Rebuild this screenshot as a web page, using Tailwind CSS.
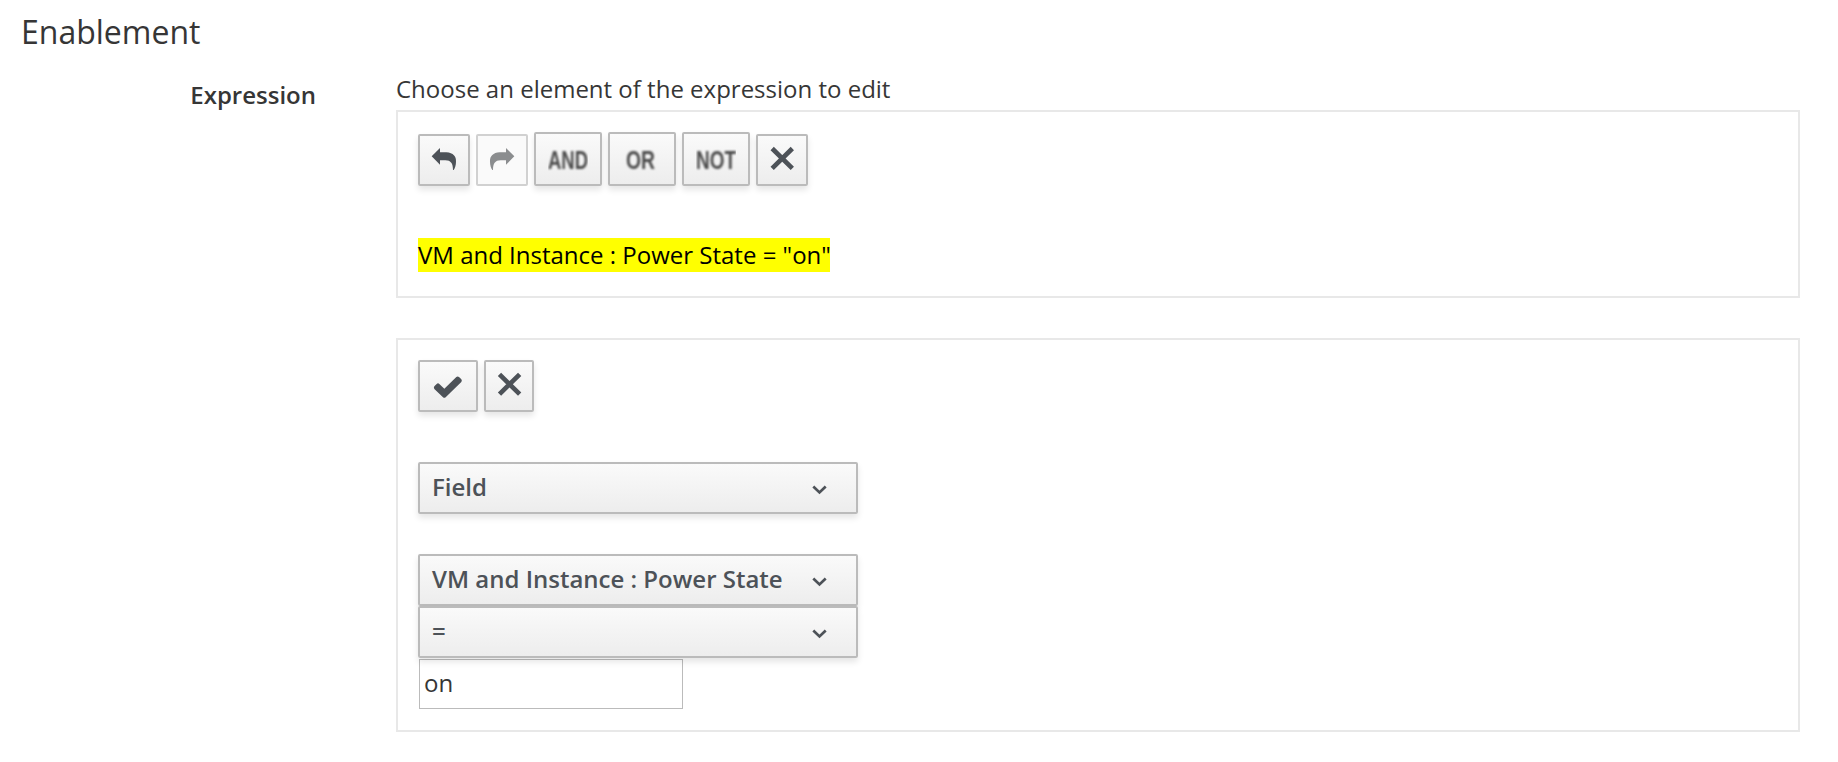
<!DOCTYPE html>
<html lang="en">
<head>
<meta charset="utf-8">
<title>Enablement</title>
<script src="https://cdn.jsdelivr.net/npm/@tailwindcss/browser@4"></script>
</head>
<body class="h-[762px] overflow-hidden bg-white font-['Open_Sans',sans-serif] text-[24px] leading-[34px] text-[#363636]">
<h3 class="flex h-[70px] items-start pt-[10px] pl-[21px] text-[32px] leading-[43px]">Enablement</h3>
<div class="flex">
  <div class="w-[396px] shrink-0 pt-2 pr-[80px] text-right font-semibold text-[#363636]">Expression</div>
  <div class="w-[1404px]">
    <div class="pt-0.5 h-[40px]">Choose an element of the expression to edit</div>
    <section class="flex h-[188px] flex-col items-start border-2 border-[#e8e8e8] pl-5 pt-5">
      <div class="flex h-[54px] items-end gap-1.5">
        <button aria-label="Undo" class="flex size-[52px] items-center justify-center rounded-[2px] border-2 border-[#bbb] bg-linear-to-b from-[#fafafa] to-[#ededed] shadow-[0_4px_6px_rgba(3,3,3,0.1)]">
          <svg class="size-[52px] shrink-0" viewBox="84 87 156 156" fill="#4d5258"><path d="M125 154L150 129V142H169C190 143 199 155 198 170C198 180 195 189 191 195H189C189 176 183 166 166 166H150V179Z"/></svg>
        </button>
        <button aria-label="Redo" class="flex size-[52px] items-center justify-center rounded-[2px] border-2 border-[#d1d1d1] bg-[#fafafa]">
          <svg class="size-[52px] shrink-0" viewBox="258 87 156 156" fill="#8b8d8f"><path d="M373 154L348 129V142H329C308 143 299 155 300 170C300 180 303 189 307 195H309C309 176 315 166 332 166H348V179Z"/></svg>
        </button>
        <button class="flex h-[54px] w-[68px] items-center justify-center rounded-[2px] border-2 border-[#bbb] bg-linear-to-b from-[#fafafa] to-[#ededed] shadow-[0_4px_6px_rgba(3,3,3,0.1)]">
          <svg class="h-10 w-10 shrink-0 overflow-hidden" viewBox="0 0 40 40"><text class="blur-[1px]" x="0" y="30" textLength="40" lengthAdjust="spacingAndGlyphs" font-family="Liberation Sans" font-weight="700" font-size="25" fill="#4a4a4a">AND</text></svg>
        </button>
        <button class="flex h-[54px] w-[68px] items-center justify-center rounded-[2px] border-2 border-[#bbb] bg-linear-to-b from-[#fafafa] to-[#ededed] shadow-[0_4px_6px_rgba(3,3,3,0.1)]">
          <svg class="h-10 w-10 shrink-0 overflow-hidden" viewBox="0 0 40 40"><text class="blur-[1px]" x="4" y="30" textLength="29" lengthAdjust="spacingAndGlyphs" font-family="Liberation Sans" font-weight="700" font-size="25" fill="#4a4a4a">OR</text></svg>
        </button>
        <button class="flex h-[54px] w-[68px] items-center justify-center rounded-[2px] border-2 border-[#bbb] bg-linear-to-b from-[#fafafa] to-[#ededed] shadow-[0_4px_6px_rgba(3,3,3,0.1)]">
          <svg class="h-10 w-10 shrink-0 overflow-hidden" viewBox="0 0 40 40"><text class="blur-[1px]" x="0" y="30" textLength="40" lengthAdjust="spacingAndGlyphs" font-family="Liberation Sans" font-weight="700" font-size="25" fill="#4a4a4a">NOT</text></svg>
        </button>
        <button aria-label="Remove" class="flex size-[52px] items-center justify-center rounded-[2px] border-2 border-[#bbb] bg-linear-to-b from-[#fafafa] to-[#ededed] shadow-[0_4px_6px_rgba(3,3,3,0.1)]">
          <svg class="size-[52px] shrink-0" viewBox="498 87 156 156" stroke="#4d5258" stroke-width="14" stroke-linecap="butt"><path d="M546.500 130.500L607 190M607 130.500L546.500 190"/></svg>
        </button>
      </div>
      <div class="mt-[52px] h-[34px] w-[412px] bg-[#ff0] text-black whitespace-nowrap">VM and Instance : Power State = "on"</div>
    </section>
    <section class="mt-10 flex h-[394px] flex-col items-start border-2 border-[#e8e8e8] pl-5 pt-5">
      <div class="flex gap-1.5">
        <button aria-label="Commit" class="flex h-[52px] w-[60px] items-center justify-center rounded-[2px] border-2 border-[#bbb] bg-linear-to-b from-[#fafafa] to-[#ededed] shadow-[0_4px_6px_rgba(3,3,3,0.1)]">
          <svg class="h-[52px] w-[60px] shrink-0" viewBox="84 90 180 156" fill="#4d5258"><path d="M133 169L140 162Q144 158 148 162L163 176L199 141Q203 138 207 141L214 148Q217 152 214 156L167 202Q163 205 159 202L133 177Q130 173 133 169Z"/></svg>
        </button>
        <button aria-label="Discard" class="flex h-[52px] w-[50px] items-center justify-center rounded-[2px] border-2 border-[#bbb] bg-linear-to-b from-[#fafafa] to-[#ededed] shadow-[0_4px_6px_rgba(3,3,3,0.1)]">
          <svg class="h-[52px] w-[50px] shrink-0" viewBox="282 90 150 156" stroke="#4d5258" stroke-width="14"><path d="M328.500 133L389 192.500M389 133L328.500 192.500"/></svg>
        </button>
      </div>
      <button class="mt-[50px] flex h-[52px] w-[440px] items-center justify-between rounded-[2px] border-2 border-[#bbb] bg-linear-to-b from-[#fafafa] to-[#ededed] pr-[29px] pl-3 font-semibold text-[#4d5258] shadow-[0_4px_6px_rgba(3,3,3,0.1)]">
        <span class="pb-0.5">Field</span>
        <svg class="mt-[3px] h-[10px] w-[15px]" viewBox="0 0 15 10" fill="none" stroke="#4d5258" stroke-width="2.7"><path d="M1.3 1.6L7.5 7.5L13.7 1.6"/></svg>
      </button>
      <button class="mt-10 flex h-[52px] w-[440px] items-center justify-between rounded-[2px] border-2 border-[#bbb] bg-linear-to-b from-[#fafafa] to-[#ededed] pr-[29px] pl-3 font-semibold text-[#4d5258] shadow-[0_4px_6px_rgba(3,3,3,0.1)]">
        <span class="pb-0.5">VM and Instance : Power State</span>
        <svg class="mt-[3px] h-[10px] w-[15px]" viewBox="0 0 15 10" fill="none" stroke="#4d5258" stroke-width="2.7"><path d="M1.3 1.6L7.5 7.5L13.7 1.6"/></svg>
      </button>
      <button class="relative flex h-[52px] w-[440px] items-center justify-between rounded-[2px] border-2 border-[#bbb] bg-linear-to-b from-[#fafafa] to-[#ededed] pr-[29px] pl-3 font-semibold text-[#4d5258] shadow-[0_4px_6px_rgba(3,3,3,0.1)]">
        <span class="pb-0.5">=</span>
        <svg class="mt-[3px] h-[10px] w-[15px]" viewBox="0 0 15 10" fill="none" stroke="#4d5258" stroke-width="2.7"><path d="M1.3 1.6L7.5 7.5L13.7 1.6"/></svg>
      </button>
      <input type="text" value="on" class="mt-px ml-px h-[50px] w-[264px] border border-[#bbb] bg-transparent px-[4px] pb-1 text-[#363636]">
    </section>
  </div>
</div>
</body>
</html>
